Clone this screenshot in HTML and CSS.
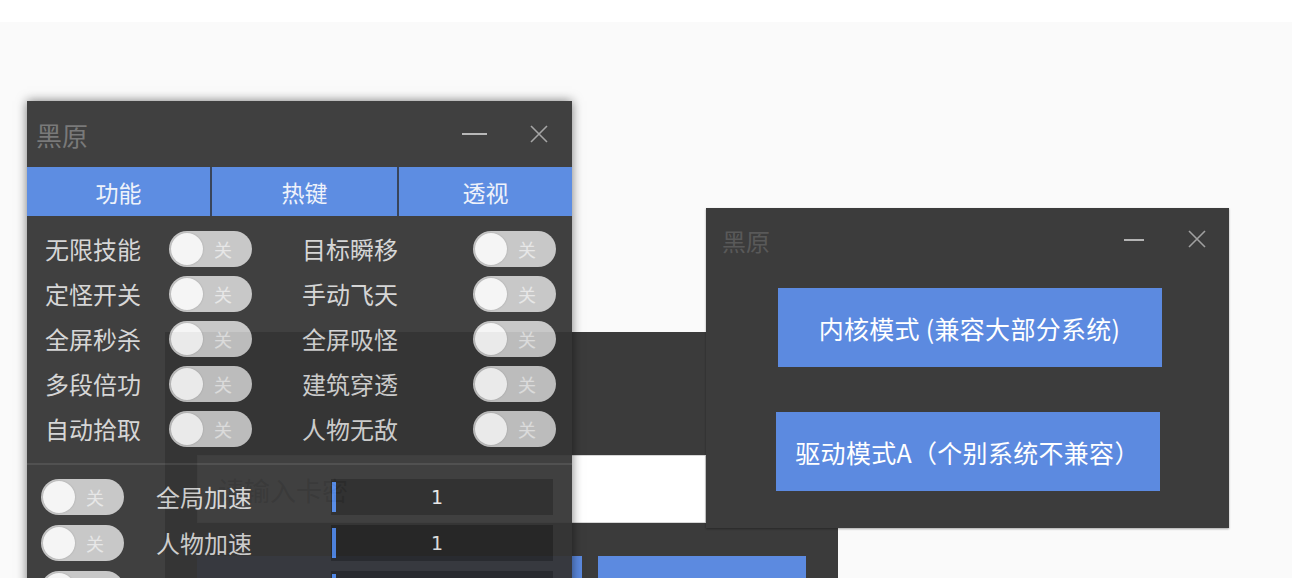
FILE: index.html
```html
<!DOCTYPE html>
<html lang="zh-CN">
<head>
<meta charset="utf-8">
<title>黑原</title>
<link rel="stylesheet" href="styles.css">
</head>
<body>
<div class="desktop">
  <div class="top-strip"></div>

  <!-- login window (behind) -->
  <section class="win win-login">
    <div class="login-body">
      <div class="key-input">请输入卡密</div>
      <div class="login-actions">
        <button class="btn btn-login">登录</button>
        <button class="btn btn-login">解绑</button>
      </div>
    </div>
  </section>

  <!-- mode select window -->
  <section class="win win-mode">
    <header class="titlebar titlebar-mode">
      <span class="win-title">黑原</span>
      <div class="win-controls">
        <span class="ctl-min"></span>
        <svg class="ctl-close" viewBox="0 0 18 18" width="18" height="18"><path d="M1 1L17 17M17 1L1 17" stroke="currentColor" stroke-width="1.6" fill="none"/></svg>
      </div>
    </header>
    <div class="mode-list">
      <button class="btn btn-mode btn-mode-a">内核模式 (兼容大部分系统)</button>
      <button class="btn btn-mode btn-mode-b">驱动模式A（个别系统不兼容）</button>
    </div>
  </section>

  <!-- main feature window -->
  <section class="win win-main">
    <header class="titlebar titlebar-main">
      <span class="win-title">黑原</span>
      <div class="win-controls">
        <span class="ctl-min"></span>
        <svg class="ctl-close" viewBox="0 0 18 18" width="18" height="18"><path d="M1 1L17 17M17 1L1 17" stroke="currentColor" stroke-width="1.6" fill="none"/></svg>
      </div>
    </header>
    <nav class="tabs">
      <span class="tab">功能</span>
      <span class="tab">热键</span>
      <span class="tab">透视</span>
    </nav>

    <div class="switch-grid">
      <span class="sw-label">无限技能</span><span class="toggle"><i class="knob"></i><b>关</b></span>
      <span class="sw-label">目标瞬移</span><span class="toggle"><i class="knob"></i><b>关</b></span>

      <span class="sw-label">定怪开关</span><span class="toggle"><i class="knob"></i><b>关</b></span>
      <span class="sw-label">手动飞天</span><span class="toggle"><i class="knob"></i><b>关</b></span>

      <span class="sw-label">全屏秒杀</span><span class="toggle"><i class="knob"></i><b>关</b></span>
      <span class="sw-label">全屏吸怪</span><span class="toggle"><i class="knob"></i><b>关</b></span>

      <span class="sw-label">多段倍功</span><span class="toggle"><i class="knob"></i><b>关</b></span>
      <span class="sw-label">建筑穿透</span><span class="toggle"><i class="knob"></i><b>关</b></span>

      <span class="sw-label">自动拾取</span><span class="toggle"><i class="knob"></i><b>关</b></span>
      <span class="sw-label">人物无敌</span><span class="toggle"><i class="knob"></i><b>关</b></span>
    </div>

    <div class="divider"></div>

    <div class="speed-list">
      <div class="speed-row">
        <span class="toggle"><i class="knob"></i><b>关</b></span>
        <span class="sp-label">全局加速</span>
        <span class="num-field">1</span>
      </div>
      <div class="speed-row">
        <span class="toggle"><i class="knob"></i><b>关</b></span>
        <span class="sp-label">人物加速</span>
        <span class="num-field">1</span>
      </div>
      <div class="speed-row">
        <span class="toggle"><i class="knob"></i><b>关</b></span>
        <span class="sp-label">攻击加速</span>
        <span class="num-field">1</span>
      </div>
    </div>
  </section>
</div>
</body>
</html>
```

FILE: styles.css
```css
* { box-sizing: border-box; }

html, body {
  margin: 0;
  padding: 0;
}

body {
  width: 1292px;
  height: 578px;
  overflow: hidden;
  background: #fafafa;
  font-family: "Noto Sans CJK SC", "Noto Sans", sans-serif;
}

.desktop {
  position: relative;
  width: 1292px;
  height: 578px;
}

.top-strip {
  height: 22px;
  background: #ffffff;
}

/* ---------- shared window parts ---------- */
.win {
  position: absolute;
}

.titlebar {
  display: flex;
  align-items: center;
  justify-content: space-between;
}

.win-controls {
  display: flex;
  align-items: center;
}

.ctl-min {
  display: block;
  height: 2px;
  background: #b4b4b4;
}

.ctl-close {
  display: block;
  color: #a0a0a0;
}

.btn {
  border: 0;
  margin: 0;
  padding: 0;
  font-family: inherit;
  color: #ffffff;
  background: #5c8ae0;
  cursor: pointer;
}

/* ---------- login window ---------- */
.win-login {
  left: 165px;
  top: 332px;
  width: 673px;
  height: 320px;
  background: #3b3b3b;
}

.login-body {
  display: flex;
  flex-direction: column;
  padding: 123px 32px 0;
  gap: 33px;
}

.key-input {
  width: 509px;
  height: 68px;
  background: #ffffff;
  border: 1px solid #d6d6d6;
  padding-left: 20px;
  display: flex;
  align-items: center;
  font-size: 26px;
  color: #8c8c8c;
}

.login-actions {
  display: grid;
  grid-template-columns: 385px 208px;
  gap: 16px;
}

.btn-login {
  height: 80px;
  font-size: 24px;
  padding-top: 10px;
}

/* ---------- mode window ---------- */
.win-mode {
  left: 706px;
  top: 208px;
  width: 523px;
  height: 320px;
  background: #3c3c3c;
  box-shadow: 0 1px 2px rgba(0, 0, 0, 0.35);
}

.titlebar-mode {
  height: 64px;
  padding: 0 23px 0 16px;
}

.titlebar-mode .win-title {
  font-size: 24px;
  color: #595959;
}

.titlebar-mode .ctl-min {
  width: 20px;
  margin-right: 44px;
}

.titlebar-mode .ctl-close {
  margin-top: -3px;
}

.mode-list {
  display: flex;
  flex-direction: column;
  align-items: center;
  gap: 45px;
  padding-top: 16px;
}

.btn-mode {
  width: 384px;
  height: 79px;
  font-size: 25px;
  letter-spacing: 0.3px;
}

.btn-mode-a { margin-left: 4px; }

/* ---------- main window ---------- */
.win-main {
  left: 27px;
  top: 101px;
  width: 545px;
  height: 520px;
  background: #353535;
  opacity: 0.94;
  box-shadow: 0 0 10px rgba(0, 0, 0, 0.55);
}

.titlebar-main {
  height: 66px;
  padding: 0 24px 0 9px;
}

.titlebar-main .win-title {
  font-size: 26px;
  color: #727272;
}

.titlebar-main .ctl-min {
  width: 25px;
  margin-right: 43px;
}

.tabs {
  display: grid;
  grid-template-columns: 183px 185px 173px;
  gap: 2px;
  height: 49px;
  background: #2e3a52;
}

.tab {
  display: flex;
  align-items: center;
  justify-content: center;
  background: #5487e1;
  color: #eef2fb;
  font-size: 23px;
  font-weight: 400;
}

.switch-grid {
  display: grid;
  grid-template-columns: 124px 133px 171px 83px;
  grid-auto-rows: 36px;
  row-gap: 9px;
  align-items: center;
  padding: 15px 0 0 18px;
}

.sw-label,
.sp-label {
  font-size: 24px;
  color: #d4d4d4;
  line-height: 1;
  white-space: nowrap;
}

.toggle {
  position: relative;
  display: flex;
  align-items: center;
  width: 83px;
  height: 36px;
  border-radius: 18px;
  background: #c5c5c5;
}

.toggle .knob {
  display: block;
  width: 32px;
  height: 32px;
  margin-left: 2px;
  border-radius: 50%;
  background: #f5f5f5;
  box-shadow: 0 0 2px rgba(0, 0, 0, 0.2);
}

.toggle b {
  font-weight: 400;
  font-size: 18px;
  color: #e6e6e6;
  margin-left: 11px;
  line-height: 1;
}

.divider {
  height: 2px;
  margin-top: 16px;
  background: #474747;
}

.speed-list {
  display: flex;
  flex-direction: column;
  gap: 10px;
  padding: 14px 0 0 14px;
}

.speed-row {
  display: flex;
  align-items: center;
  height: 36px;
}

.sp-label {
  margin-left: 32px;
  width: 175px;
}

.num-field {
  position: relative;
  width: 222px;
  height: 36px;
  background: #262626;
  color: #e6e6e6;
  font-size: 19px;
  display: flex;
  align-items: center;
  justify-content: center;
  padding-right: 10px;
  font-family: "DejaVu Sans", sans-serif;
}

.num-field::before {
  content: "";
  position: absolute;
  left: 1px;
  top: 3px;
  bottom: 3px;
  width: 4px;
  background: #4f86e6;
}
```
